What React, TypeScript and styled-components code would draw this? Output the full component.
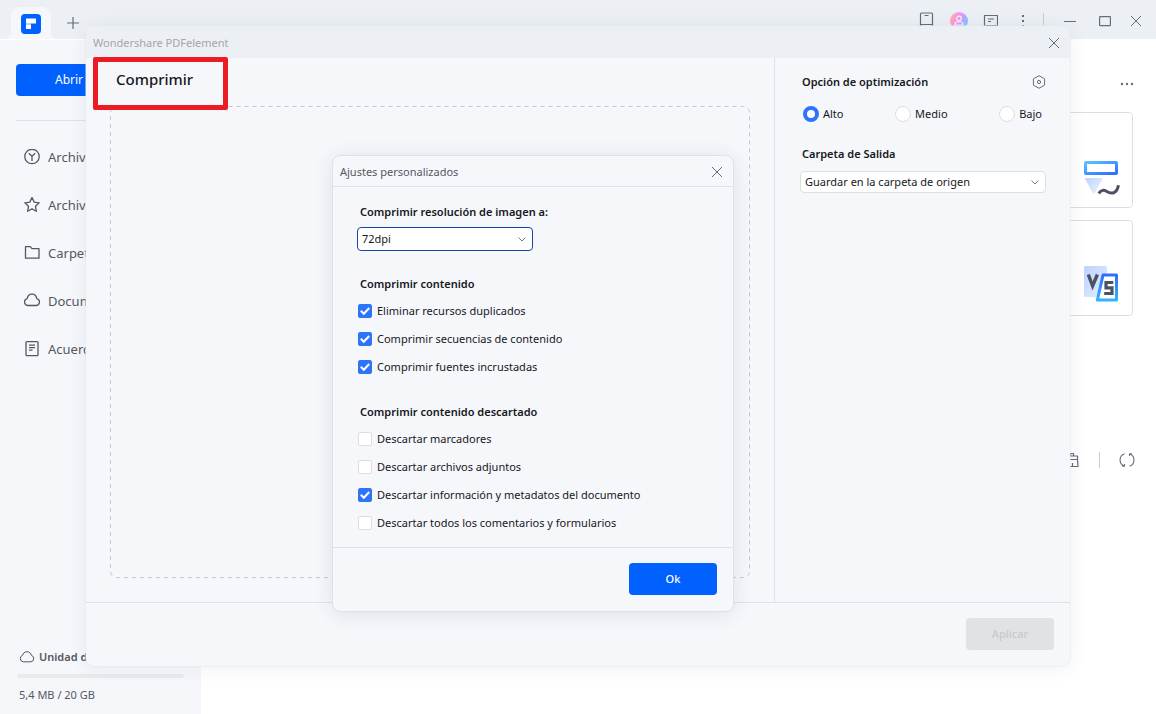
import React, { useState } from 'react';
import styled, { createGlobalStyle } from 'styled-components';

const font = '"Noto Sans", "Open Sans", "Liberation Sans", sans-serif';

const GlobalStyle = createGlobalStyle`
  *, *::before, *::after { box-sizing: border-box; }
  body { margin: 0; font-family: ${font}; font-size: 11px; line-height: 16px; color: #16181d; }
  button, select, input { font: inherit; color: inherit; margin: 0; }
  svg { display: block; flex: none; }
`;

/* ---------- main window ---------- */

const Window = styled.div`
  position: relative;
  display: flex;
  flex-direction: column;
  min-height: 100vh;
  overflow: hidden;
  background: #fff;
`;

const TitleBar = styled.header`
  display: flex;
  align-items: center;
  justify-content: space-between;
  height: 39px;
  padding: 0 8px 0 11px;
  background: #eceff4;
`;

const TabStrip = styled.div`
  display: flex;
  align-items: center;
  align-self: stretch;
  gap: 11px;
  padding-top: 6px;
`;

const Tab = styled.div`
  position: relative;
  display: flex;
  align-items: center;
  justify-content: center;
  align-self: flex-end;
  width: 40px;
  height: 32px;
  padding-top: 2px;
  border-radius: 9px 9px 0 0;
  background: #f5f7fb;

  &::before,
  &::after {
    content: '';
    position: absolute;
    bottom: 0;
    width: 6px;
    height: 6px;
  }
  &::before {
    right: 100%;
    background: radial-gradient(circle at 0 0, transparent 6px, #f5f7fb 6px);
  }
  &::after {
    left: 100%;
    background: radial-gradient(circle at 100% 0, transparent 6px, #f5f7fb 6px);
  }
`;

const IconButton = styled.button<{ $w?: number }>`
  display: flex;
  align-items: center;
  justify-content: center;
  width: ${(p) => p.$w ?? 22}px;
  height: 22px;
  padding: 0;
  border: 0;
  background: none;
  color: #666b80;
`;

const WindowTools = styled.div`
  display: flex;
  align-items: center;
  gap: 10px;
  padding-top: 2px;
`;

const ToolDivider = styled.span<{ $h: number }>`
  width: 1px;
  height: ${(p) => p.$h}px;
  background: #c9ccd3;
`;

const Body = styled.div`
  display: flex;
  flex: 1;
`;

const Sidebar = styled.aside`
  display: flex;
  flex-direction: column;
  width: 201px;
  padding: 24px 16px 11px;
  border-top: 1px solid #fff;
  background: #f5f7fb;
`;

const OpenButton = styled.button`
  height: 32px;
  padding: 0 39px;
  border: 0;
  border-radius: 4px;
  background: #0061ff;
  color: #fff;
  font-size: 12px;
  text-align: left;
`;

const Nav = styled.nav`
  display: flex;
  flex-direction: column;
  margin-top: 24px;
  padding-top: 12px;
  border-top: 1px solid #dfe1e6;
`;

const NavLink = styled.a`
  display: flex;
  align-items: center;
  gap: 8px;
  height: 48px;
  padding: 0 8px;
  color: #55585f;
  font-size: 13px;
  line-height: 20px;
  text-decoration: none;
  white-space: nowrap;
`;

const Storage = styled.div`
  display: flex;
  flex-direction: column;
  margin-top: auto;
  gap: 9px;
  padding: 0 1px 0 3px;
  color: #55585f;
`;

const StorageTitle = styled.div`
  display: flex;
  align-items: center;
  gap: 4px;
  font-weight: 600;
`;

const Meter = styled.div`
  height: 4px;
  margin: 0 0 0 -2px;
  border-radius: 2px;
  background: #e8eaee;
`;

const Main = styled.main`
  display: flex;
  flex: 1;
  flex-direction: column;
  align-items: flex-end;
  padding: 34px 22px 0;
`;

const CardList = styled.div`
  display: flex;
  flex-direction: column;
  gap: 12px;
  margin: 17px 1px 0 0;
  width: 232px;
`;

const Card = styled.button`
  display: flex;
  align-items: flex-end;
  justify-content: flex-end;
  height: 96px;
  padding: 0 12px 11px;
  border: 1px solid #dcdee2;
  border-radius: 4px;
  background: #fff;
`;

const ListTools = styled.div`
  display: flex;
  align-items: center;
  gap: 16px;
  margin: 133px -4px 0 0;
`;

/* ---------- dialogs ---------- */

const CompressDialog = styled.section`
  position: absolute;
  top: 26px;
  right: 86px;
  bottom: 48px;
  left: 86px;
  display: flex;
  flex-direction: column;
  border-radius: 8px;
  background: #f5f7fb;
  box-shadow: 0 0 0 1px rgba(225, 232, 238, 0.5), 0 2px 20px rgba(30, 45, 70, 0.07);
`;

const DialogBar = styled.header<{ $plain?: boolean }>`
  display: flex;
  align-items: center;
  justify-content: space-between;
  height: ${(p) => (p.$plain ? 31 : 32)}px;
  padding: 2px 5px 0 7px;
  border-radius: 8px 8px 0 0;
  border-bottom: ${(p) => (p.$plain ? '1px solid #dfe1e6' : '0')};
  background: ${(p) => (p.$plain ? 'transparent' : '#eceff4')};
  color: ${(p) => (p.$plain ? '#55585f' : '#a3a6ad')};
`;

const DialogBody = styled.div`
  display: flex;
  flex: 1;
`;

const FilePane = styled.div`
  position: relative;
  display: flex;
  flex: 1;
  flex-direction: column;
  padding: 0 25px 25px 24px;
`;

const PageTitle = styled.h1`
  margin: 0;
  padding: 11px 6px 17px;
  font-size: 15px;
  font-weight: 500;
  line-height: 20px;
`;

const Highlight = styled.div`
  position: absolute;
  top: -1px;
  left: 7px;
  width: 135px;
  height: 53px;
  border: 5px solid #ed1c24;
  border-radius: 2px;
`;

const DropZone = styled.div`
  display: flex;
  flex: 1;
`;

const DashedFrame = styled.svg`
  width: 100%;
  height: 100%;
  overflow: visible;
`;

const OptionPane = styled.div`
  display: flex;
  flex-direction: column;
  width: 296px;
  padding: 13px 24px 0 25px;
  border-left: 1px solid #dfe1e6;
`;

const OptionHead = styled.div`
  display: flex;
  align-items: center;
  justify-content: space-between;
  margin-right: -4px;
`;

const SectionTitle = styled.h2`
  margin: 0;
  padding-left: 2px;
  font-size: 11px;
  font-weight: 600;
  line-height: 16px;
`;

const RadioRow = styled.div`
  display: flex;
  align-items: center;
  justify-content: space-between;
  margin: 13px 4px 24px 3px;
`;

const Choice = styled.label`
  display: flex;
  align-items: center;
  gap: 4px;
`;

const Radio = styled.input`
  appearance: none;
  width: 16px;
  height: 16px;
  border: 1px solid #dcdee2;
  border-radius: 50%;
  background: #fff;

  &:checked {
    border: 4px solid #2e74fb;
  }
`;

const SelectBox = styled.div<{ $active?: boolean; $w?: string }>`
  position: relative;
  display: flex;
  width: ${(p) => p.$w ?? 'auto'};
  height: ${(p) => (p.$active ? 24 : 22)}px;

  select {
    appearance: none;
    width: 100%;
    padding: 0 24px 0 4px;
    border: 1px solid ${(p) => (p.$active ? '#1546a8' : '#dcdee2')};
    border-radius: 4px;
    outline: none;
    background: #fff;
  }
  svg {
    position: absolute;
    top: 50%;
    right: 7px;
    margin-top: -2px;
    pointer-events: none;
  }
`;

const CompressFooter = styled.footer`
  display: flex;
  justify-content: flex-end;
  padding: 15px 16px 16px;
  border-top: 1px solid #dfe1e6;
`;

const ActionButton = styled.button`
  width: 88px;
  height: 32px;
  border: 0;
  border-radius: 4px;
  background: #0061ff;
  color: #fff;
  font-weight: 500;

  &:disabled {
    background: #e1e2e4;
    color: #c8c9cc;
  }
`;

const SettingsDialog = styled.section`
  position: absolute;
  top: 129px;
  left: 246px;
  display: flex;
  flex-direction: column;
  width: 402px;
  border: 1px solid #dfe1e6;
  border-radius: 8px;
  background: #f5f7fb;
  box-shadow: 0 2px 20px rgba(30, 45, 70, 0.11);
`;

const SettingsBody = styled.div`
  display: flex;
  flex-direction: column;
  padding: 17px 24px 12px;
  gap: 25px;

  ${SectionTitle} {
    padding-left: 3px;
  }
`;

const Group = styled.div<{ $gap: number }>`
  display: flex;
  flex-direction: column;
  gap: ${(p) => p.$gap}px;
`;

const CheckList = styled.div`
  display: flex;
  flex-direction: column;
  gap: 12px;
  padding: 0 0 4px 1px;
`;

const CheckLabel = styled.label`
  display: flex;
  align-items: center;
  gap: 5px;
`;

const CheckWrap = styled.span`
  display: grid;

  input,
  svg {
    grid-area: 1 / 1;
  }
  svg {
    pointer-events: none;
  }
`;

const CheckInput = styled.input`
  appearance: none;
  width: 14px;
  height: 14px;
  border: 1px solid #dcdee2;
  border-radius: 2px;
  background: #fff;

  &:checked {
    border-color: #2e74fb;
    background: #2e74fb;
  }
`;

const SettingsFooter = styled.footer`
  display: flex;
  justify-content: flex-end;
  padding: 15px 16px 16px;
  border-top: 1px solid #dfe1e6;
`;

/* ---------- icons ---------- */

const Line = ({ size = 16, children, w = 1.3 }: { size?: number; w?: number; children: React.ReactNode }) => (
  <svg width={size} height={size} viewBox={`0 0 ${size} ${size}`} fill="none" stroke="currentColor" strokeWidth={w} strokeLinejoin="round">
    {children}
  </svg>
);

const Logo = () => (
  <svg width="20" height="20" viewBox="0 0 20 20">
    <rect width="20" height="20" rx="4" fill="#0061ff" />
    <path d="M5 4.500h10v5H5z" fill="#fff" />
    <path d="M5 9.500h5V15H5z" fill="#fff" />
    <path d="M5 9h5v2H5z" fill="#b9d3ff" />
  </svg>
);

const CloseIcon = () => (
  <Line size={12} w={1}>
    <path d="M1 1l10 10M11 1L1 11" />
  </Line>
);

const Chevron = () => (
  <svg width="8" height="5" viewBox="0 0 8 5" fill="none" stroke="#6a6d74" strokeWidth="0.9">
    <path d="M.5.5L4 4 7.5.5" />
  </svg>
);

const CloudPath = () => <path d="M4.2 12.8a3.3 3.3 0 0 1-.7-6.4C3.900 4.400 5.700 2.700 8 2.700s4.100 1.700 4.500 3.700a3.300 3.300 0 0 1-.7 6.400z" />;

const HexIcon = () => (
  <Line size={14} w={1}>
    <path d="M7 .7l5.600 3.200v6.200L7 13.300l-5.600-3.200V3.900z" />
    <circle cx="7" cy="7" r="1.600" />
  </Line>
);

const Avatar = () => (
  <svg width="20" height="18" viewBox="0 0 20 18">
    <defs>
      <linearGradient id="face" x1="0" y1="0.300" x2="1" y2="0.700">
        <stop offset="0" stopColor="#ffb09a" />
        <stop offset="0.400" stopColor="#f595f2" />
        <stop offset="0.700" stopColor="#b9a8ff" />
        <stop offset="1" stopColor="#58e0f5" />
      </linearGradient>
    </defs>
    <circle cx="11" cy="9" r="9" fill="url(#face)" />
    <g fill="none" stroke="#fff" strokeOpacity="0.850" strokeWidth="1.200">
      <circle cx="11" cy="6.500" r="2.300" />
      <path d="M7 13v-.5c0-1.600 1.200-2.500 2.500-2.500h3c1.300 0 2.500.9 2.500 2.500v.5z" />
    </g>
  </svg>
);

const SignIcon = () => (
  <svg width="36" height="36" viewBox="0 0 36 36" fill="none">
    <defs>
      <linearGradient id="bar" x1="0" y1="0" x2="1" y2="1">
        <stop offset="0" stopColor="#5cc0ff" />
        <stop offset="1" stopColor="#2f6dff" />
      </linearGradient>
      <linearGradient id="tri" x1="0" y1="0" x2="1" y2="1">
        <stop offset="0" stopColor="#bcd3ff" />
        <stop offset="1" stopColor="#eef4ff" />
      </linearGradient>
    </defs>
    <rect x="1.500" y="2.500" width="31" height="11" rx=".5" stroke="url(#bar)" strokeWidth="3" />
    <path d="M2 18h15.500c.7 0 1 .7.600 1.300l-7.400 14c-.4.900-1.500.9-1.900 0L1.300 19.200C1 18.600 1.300 18 2 18z" fill="url(#tri)" />
    <path d="M14.800 33.500c1.600-2.800 4.400-4.200 7.500-2.300 2.300 1.400 4.800 2.700 7.600 1.400 2.900-1.400 4-3.900 4.500-7.400" stroke="#4c5264" strokeWidth="3" />
  </svg>
);

const CompareIcon = () => (
  <svg width="36" height="38" viewBox="0 0 36 38" fill="none">
    <defs>
      <linearGradient id="sheet" x1="0" y1="0" x2="1" y2="1">
        <stop offset="0" stopColor="#bcd3ff" />
        <stop offset="1" stopColor="#e4edff" />
      </linearGradient>
      <linearGradient id="frame" x1="0" y1="0" x2="0" y2="1">
        <stop offset="0" stopColor="#2f6dff" />
        <stop offset="1" stopColor="#2fb4ff" />
      </linearGradient>
    </defs>
    <rect x="0" y="0" width="23" height="31" rx="1.500" fill="url(#sheet)" />
    <path d="M19 9h13.500v25H13.400z" fill="#fff" stroke="url(#frame)" strokeWidth="3" strokeLinejoin="round" />
    <path d="M4.300 8.500l4.300 11.500 4.800-11.500" stroke="#4c5264" strokeWidth="3.400" />
    <path d="M29.300 16.500h-7.300v5.300h6v5.700h-7.800" stroke="#4c5264" strokeWidth="3.200" />
  </svg>
);

/* ---------- page ---------- */

const navItems = [
  {
    label: 'Archivos recientes',
    icon: (
      <>
        <circle cx="8" cy="7.500" r="7.200" />
        <path d="M4.800 4.300L8 7.300l3.200-3M8 7.300v4.700" />
      </>
    ),
  },
  {
    label: 'Archivos favoritos',
    icon: <path d="M8 .5l2.200 4.600 5 .7-3.700 3.500.9 5L8 11.900l-4.400 2.400.9-5L.8 5.800l5-.7z" />,
  },
  { label: 'Carpetas recientes', icon: <path d="M1.500 1.700h4.800l1.700 2h7v9.500H1.500z" /> },
  {
    label: 'Documentos en nube',
    icon: <path d="M4 12.500a3.500 3.500 0 0 1-.8-6.900C3.600 3.200 5.500 1.200 8 1.200s4.400 2 4.800 4.400a3.500 3.500 0 0 1-.8 6.900z" />,
  },
  {
    label: 'Acuerdos',
    icon: (
      <>
        <rect x="2" y="0.700" width="12" height="14" rx="1" />
        <path d="M5 4.200h6M5 6.700h6M5 9.200h3.500" />
      </>
    ),
  },
];

const contentOptions = [
  { label: 'Eliminar recursos duplicados', on: true },
  { label: 'Comprimir secuencias de contenido', on: true },
  { label: 'Comprimir fuentes incrustadas', on: true },
];

const discardOptions = [
  { label: 'Descartar marcadores', on: false },
  { label: 'Descartar archivos adjuntos', on: false },
  { label: 'Descartar información y metadatos del documento', on: true },
  { label: 'Descartar todos los comentarios y formularios', on: false },
];

function CheckOption({ label, on }: { label: string; on: boolean }) {
  const [checked, setChecked] = useState(on);
  return (
    <CheckLabel>
      <CheckWrap>
        <CheckInput type="checkbox" checked={checked} onChange={(e) => setChecked(e.target.checked)} />
        <svg width="14" height="14" viewBox="0 0 14 14" fill="none" stroke="#fff" strokeWidth="2">
          {checked && <path d="M2.800 6.800l3 3 5.400-5.800" />}
        </svg>
      </CheckWrap>
      {label}
    </CheckLabel>
  );
}

export default function App() {
  const [level, setLevel] = useState('Alto');

  return (
    <>
      <GlobalStyle />
      <Window>
        <TitleBar>
          <TabStrip>
            <Tab>
              <Logo />
            </Tab>
            <IconButton aria-label="Nueva pestaña">
              <Line size={12} w={1.2}>
                <path d="M6 0v12M0 6h12" />
              </Line>
            </IconButton>
          </TabStrip>
          <WindowTools>
            <IconButton aria-label="Biblioteca">
              <Line size={18} w={1.2}>
                <path d="M3.500 16.500V2c0-.6.400-1 1-1h10c.6 0 1 .4 1 1v14.500M3.500 12.500h12M7.500 3.500h4" />
              </Line>
            </IconButton>
            <IconButton aria-label="Cuenta">
              <Avatar />
            </IconButton>
            <IconButton aria-label="Comentarios">
              <Line w={1.2}>
                <path d="M2.500 14.500V2.500h13v10h-11zM6 6h6M6 8.500h3" />
              </Line>
            </IconButton>
            <IconButton aria-label="Más">
              <svg width="4" height="14" viewBox="0 0 4 14" fill="currentColor">
                <path d="M2 1h2v2H2zM2 6h2v2H2zM2 11h2v2H2z" />
              </svg>
            </IconButton>
            <ToolDivider $h={16} />
            <IconButton aria-label="Minimizar" $w={32}>
              <Line size={12} w={1}>
                <path d="M0 6.500h12" />
              </Line>
            </IconButton>
            <IconButton aria-label="Maximizar" $w={18}>
              <Line size={12} w={1.2}>
                <rect x=".6" y="1.600" width="10.800" height="9" rx=".5" />
              </Line>
            </IconButton>
            <IconButton aria-label="Cerrar" $w={24}>
              <CloseIcon />
            </IconButton>
          </WindowTools>
        </TitleBar>

        <Body>
          <Sidebar>
            <OpenButton>Abrir PDF</OpenButton>
            <Nav>
              {navItems.map((item) => (
                <NavLink key={item.label} href="#">
                  <Line>{item.icon}</Line>
                  {item.label}
                </NavLink>
              ))}
            </Nav>
            <Storage>
              <StorageTitle>
                <Line w={1}>
                  <CloudPath />
                </Line>
                Unidad de nube
              </StorageTitle>
              <Meter />
              <span>5,4 MB / 20 GB</span>
            </Storage>
          </Sidebar>

          <Main>
            <IconButton aria-label="Más opciones" $w={14}>
              <svg width="14" height="4" viewBox="0 0 14 4" fill="currentColor">
                <circle cx="2" cy="2" r="1.200" />
                <circle cx="7" cy="2" r="1.200" />
                <circle cx="12" cy="2" r="1.200" />
              </svg>
            </IconButton>
            <CardList>
              <Card aria-label="Firmar">
                <SignIcon />
              </Card>
              <Card aria-label="Comparar">
                <CompareIcon />
              </Card>
            </CardList>
            <ListTools>
              <IconButton aria-label="Limpiar">
                <Line w={1.2}>
                  <path d="M6.500 4V1.500h3V4M2.500 7.500V4h11v3.500zM3 7.500h10.500l.5 7H2zM8.500 14.500V11" />
                </Line>
              </IconButton>
              <ToolDivider $h={16} />
              <IconButton aria-label="Actualizar">
                <Line w={1.1}>
                  <path d="M5.500 1.700a6.700 6.700 0 0 0-.3 12.500M3.200 14.200h2.300v-2.300M10.500 14.300a6.700 6.700 0 0 0 .3-12.500M12.800 1.800h-2.300v2.300" />
                </Line>
              </IconButton>
            </ListTools>
          </Main>
        </Body>

        <CompressDialog role="dialog" aria-label="Comprimir">
          <DialogBar>
            Wondershare PDFelement
            <IconButton aria-label="Cerrar">
              <CloseIcon />
            </IconButton>
          </DialogBar>
          <DialogBody>
            <FilePane>
              <PageTitle>Comprimir</PageTitle>
              <Highlight />
              <DropZone>
                <DashedFrame>
                  <rect x="0.500" y="0.500" width="100%" height="100%" rx="6" fill="none" stroke="#c3c6d4" strokeDasharray="4 4" />
                </DashedFrame>
              </DropZone>
            </FilePane>
            <OptionPane>
              <OptionHead>
                <SectionTitle>Opción de optimización</SectionTitle>
                <IconButton aria-label="Ajustes personalizados">
                  <HexIcon />
                </IconButton>
              </OptionHead>
              <RadioRow>
                {['Alto', 'Medio', 'Bajo'].map((name) => (
                  <Choice key={name}>
                    <Radio type="radio" name="level" checked={level === name} onChange={() => setLevel(name)} />
                    {name}
                  </Choice>
                ))}
              </RadioRow>
              <Group $gap={9}>
                <SectionTitle>Carpeta de Salida</SectionTitle>
                <SelectBox>
                  <select aria-label="Carpeta de Salida">
                    <option>Guardar en la carpeta de origen</option>
                  </select>
                  <Chevron />
                </SelectBox>
              </Group>
            </OptionPane>
          </DialogBody>
          <CompressFooter>
            <ActionButton disabled>Aplicar</ActionButton>
          </CompressFooter>

          <SettingsDialog role="dialog" aria-label="Ajustes personalizados">
            <DialogBar $plain>
              Ajustes personalizados
              <IconButton aria-label="Cerrar">
                <CloseIcon />
              </IconButton>
            </DialogBar>
            <SettingsBody>
              <Group $gap={7}>
                <SectionTitle>Comprimir resolución de imagen a:</SectionTitle>
                <SelectBox $active $w="176px">
                  <select aria-label="Comprimir resolución de imagen a:">
                    <option>72dpi</option>
                  </select>
                  <Chevron />
                </SelectBox>
              </Group>
              <Group $gap={11}>
                <SectionTitle>Comprimir contenido</SectionTitle>
                <CheckList>
                  {contentOptions.map((o) => (
                    <CheckOption key={o.label} {...o} />
                  ))}
                </CheckList>
              </Group>
              <Group $gap={11}>
                <SectionTitle>Comprimir contenido descartado</SectionTitle>
                <CheckList>
                  {discardOptions.map((o) => (
                    <CheckOption key={o.label} {...o} />
                  ))}
                </CheckList>
              </Group>
            </SettingsBody>
            <SettingsFooter>
              <ActionButton>Ok</ActionButton>
            </SettingsFooter>
          </SettingsDialog>
        </CompressDialog>
      </Window>
    </>
  );
}
